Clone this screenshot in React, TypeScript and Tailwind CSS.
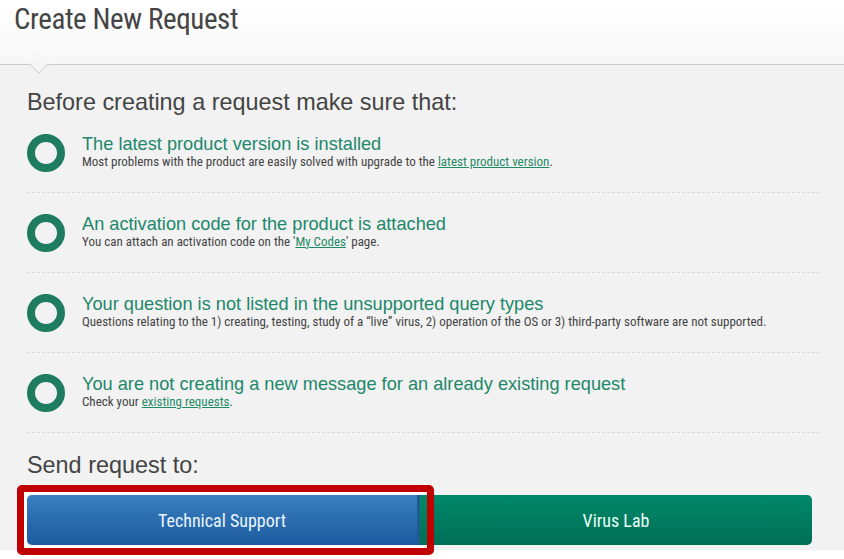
import React from 'react';

interface CheckItem {
  title: string;
  body: React.ReactNode;
}

const link = 'text-[#1f8a66] underline';

const items: CheckItem[] = [
  {
    title: 'The latest product version is installed',
    body: (
      <>
        Most problems with the product are easily solved with upgrade to the{' '}
        <a className={link}>latest product version</a>.
      </>
    ),
  },
  {
    title: 'An activation code for the product is attached',
    body: (
      <>
        You can attach an activation code on the '<a className={link}>My Codes</a>' page.
      </>
    ),
  },
  {
    title: 'Your question is not listed in the unsupported query types',
    body: (
      <>
        Questions relating to the 1) creating, testing, study of a “live” virus, 2) operation of the
        OS or 3) third-party software are not supported.
      </>
    ),
  },
  {
    title: 'You are not creating a new message for an already existing request',
    body: (
      <>
        Check your <a className={link}>existing requests</a>.
      </>
    ),
  },
];

const arial = "font-['Liberation_Sans',Arial,sans-serif]";
const cond = "font-['Roboto_Condensed','Liberation_Sans_Narrow',Roboto,sans-serif]";

export default function App() {
  return (
    <div className="w-[844px] h-[559px] bg-white overflow-hidden">
      {/* Header */}
      <div className="relative h-[65px] border-b border-[#c9c9c9] bg-gradient-to-b from-white to-[#f7f7f7]">
        <h1 className={`${cond} pl-[14px] pt-[1px] text-[29px] leading-[36px] tracking-[-0.4px] text-[#454545]`}>
          Create New Request
        </h1>
        {/* notch */}
        <div className="absolute left-[32px] top-[57px] w-[14px] h-[14px] rotate-45 bg-[#f5f5f5] border-r border-b border-[#d4d4d4]" />
      </div>

      {/* Content */}
      <div className="bg-[#f2f2f2] pl-[27px] pr-[24px] pt-[24px] pb-[5px]">
        <h2 className={`${arial} text-[23.4px] leading-[26px] text-[#444]`}>
          Before creating a request make sure that:
        </h2>

        <div className="mt-[-2px]">
          {items.map((it) => (
            <div
              key={it.title}
              className="h-[80px] flex items-center gap-[17px] border-b border-dashed border-[#dadada]"
            >
              <div className="w-[38px] h-[38px] shrink-0 rounded-full border-[8px] border-[#1f7c5f]" />
              <div className="-mt-[3px]">
                <div className={`${arial} text-[18.2px] leading-[20px] text-[#20876a]`}>{it.title}</div>
                <div className={`${cond} text-[13px] leading-[15px] text-[#444]`}>{it.body}</div>
              </div>
            </div>
          ))}
        </div>

        <h2 className={`${arial} mt-[19px] text-[23.4px] leading-[26px] text-[#444]`}>Send request to:</h2>

        <div className="relative mt-[17px] mr-[8px] flex h-[50px]">
          <button
            className={`${cond} w-[393px] rounded-l-[5px] border-r-[3px] border-[#1d5c92] bg-gradient-to-b from-[#3a80c0] to-[#1b5a9e] text-[18px] text-[#eaf5ff]`}
          >
            Technical Support
          </button>
          <button
            className={`${cond} flex-1 rounded-r-[5px] bg-gradient-to-b from-[#00896a] to-[#006f55] text-[18px] text-[#eafff6]`}
          >
            Virus Lab
          </button>
          {/* highlight annotation */}
          <div className="pointer-events-none absolute left-[-10px] top-[-10px] w-[417px] h-[70px] rounded-[5px] border-[7px] border-[#c00000]">
            <div className="h-full w-[400px] border-l-[3px] border-t-[3px] border-b-[3px] border-white" />
          </div>
        </div>
      </div>
    </div>
  );
}
